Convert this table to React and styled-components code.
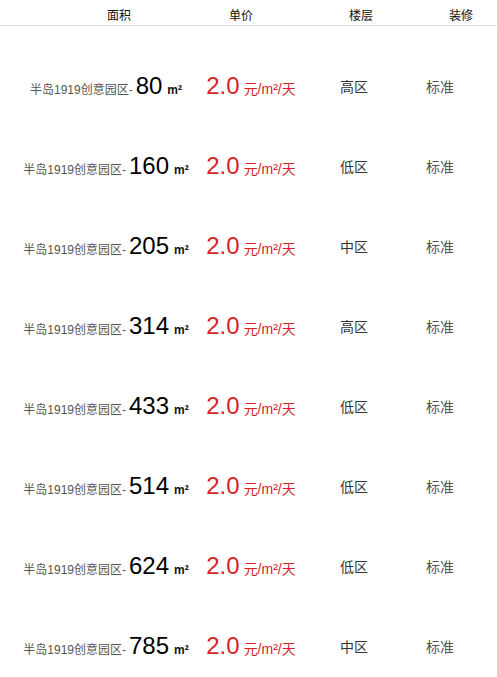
import React from "react";
import styled, { createGlobalStyle } from "styled-components";

const Global = createGlobalStyle`
  html, body { margin: 0; padding: 0; background: #fff; }
  body { font-family: "Liberation Sans", Arial, "Noto Sans CJK SC", sans-serif; }
`;

const Page = styled.div`
  width: 497px;
  overflow: hidden;
`;

const Header = styled.div`
  display: grid;
  grid-template-columns: 130px 114px 126px 74px;
  justify-items: center;
  padding-left: 54px;
  height: 26px;
  align-items: end;
  border-bottom: 1px solid #e3e3e3;
  font-size: 12px;
  color: #111;
  line-height: 16px;
  box-sizing: border-box;
`;

const HeadCell = styled.div`
  padding-bottom: 1px;
`;

const List = styled.div`
  padding-top: 20px;
`;

const Row = styled.div`
  display: grid;
  grid-template-columns: 180px 110px 96px 76px;
  justify-items: center;
  align-items: center;
  padding-left: 16px;
  height: 80px;
  white-space: nowrap;
`;

const Cell = styled.div`
  display: flex;
  align-items: baseline;
`;

const Name = styled.span`
  font-size: 12px;
  color: #555;
  margin-right: 3px;
`;

const Big = styled.span`
  font-size: 24px;
  color: ${(p) => p.$color || "#000"};
`;

const Unit = styled.span`
  font-size: ${(p) => p.$size || 12}px;
  font-weight: ${(p) => (p.$bold ? 700 : 400)};
  color: ${(p) => p.$color || "#111"};
  margin-left: ${(p) => p.$gap || 4}px;
`;

const Plain = styled.span`
  font-size: 14px;
  color: ${(p) => p.$color};
`;

const rows = [
  ["80", "高区"],
  ["160", "低区"],
  ["205", "中区"],
  ["314", "高区"],
  ["433", "低区"],
  ["514", "低区"],
  ["624", "低区"],
  ["785", "中区"],
];

export default function App() {
  return (
    <Page>
      <Global />
      <Header>
        <HeadCell>面积</HeadCell>
        <HeadCell>单价</HeadCell>
        <HeadCell>楼层</HeadCell>
        <HeadCell>装修</HeadCell>
      </Header>
      <List>
        {rows.map(([area, floor], i) => (
          <Row key={i}>
            <Cell>
              <Name>半岛1919创意园区-</Name>
              <Big>{area}</Big>
              <Unit $bold $gap={5}>m²</Unit>
            </Cell>
            <Cell>
              <Big $color="#d8232a">2.0</Big>
              <Unit $size={14} $color="#d8232a">元/m²/天</Unit>
            </Cell>
            <Cell>
              <Plain $color="#333">{floor}</Plain>
            </Cell>
            <Cell>
              <Plain $color="#555">标准</Plain>
            </Cell>
          </Row>
        ))}
      </List>
    </Page>
  );
}
